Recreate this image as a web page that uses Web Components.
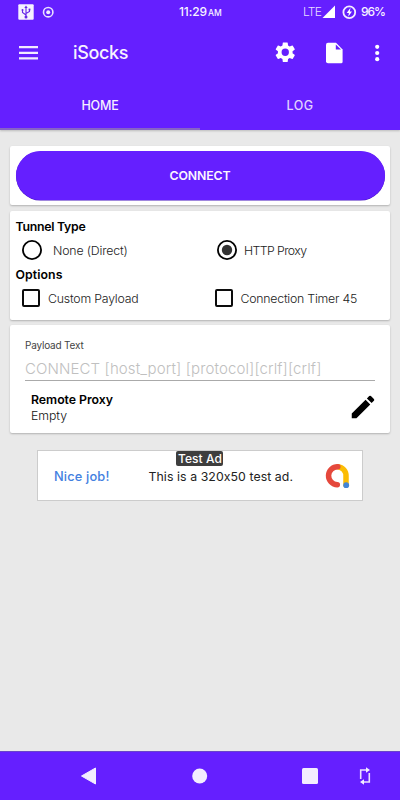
<!DOCTYPE html>
<html lang="en">
<head>
<meta charset="utf-8">
<title>iSocks</title>
<style>
html, body { margin: 0; height: 100%; }
body { font-family: Inter, Roboto, "Liberation Sans", sans-serif; background: #e9e9e9; overflow: hidden; }
</style>
</head>
<body>
<socks-app></socks-app>
<script>
/* Single line of text, tracked so that it spans the width given in "w". */
class FitText extends HTMLElement {
  connectedCallback() {
    const root = this.attachShadow({ mode: 'open' });
    const g = (n, d) => this.getAttribute(n) || d;
    root.innerHTML = `<style>
      :host { display: block; white-space: nowrap; width: ${g('w', 50)}px; font-size: ${g('size', 12)}px;
        font-weight: ${g('weight', 400)}; color: ${g('color', 'inherit')}; line-height: 16px; height: 16px; }
      span { display: inline-block; }
    </style><span></span>`;
    const s = root.querySelector('span');
    s.textContent = g('text', '');
    const n = s.textContent.length;
    const gap = (parseFloat(g('w', 50)) - s.getBoundingClientRect().width) / n;
    s.style.letterSpacing = gap.toFixed(3) + 'px';
  }
}

const define = (name, html) => customElements.define(name, class extends HTMLElement {
  constructor() {
    super();
    this.attachShadow({ mode: 'open' }).innerHTML = html;
  }
});

define('status-bar', `<style>
  :host { display: grid; grid-template-columns: 18px 16px 8px 12px 125px 29px 95px 17px 2px 13px 7px 15px 4px 30px; align-items: center; height: 24px; }
  svg { display: block; }
  .time { display: flex; align-items: baseline; }
</style>
<i></i>
<svg width="16" height="16"><rect x=".3" y=".3" width="15.4" height="15.4" rx="1" fill="#f6f1ff"/><g fill="none" stroke="#6525e8" stroke-width="1.100"><path d="M8 3v10M8 11 4.500 8.500V6M8 9.500l3.500-2V5.500"/></g><g fill="#6525e8"><path d="m8 1.500 1.700 2.600H6.300z"/><circle cx="8" cy="13" r="1.500"/><circle cx="4.500" cy="6" r="1"/><path d="M10.600 4.600h1.800v1.800h-1.800z"/></g></svg>
<i></i>
<svg width="12" height="12"><circle cx="6.200" cy="6.200" r="4.700" fill="none" stroke="#e9dfff" stroke-width="1.600"/><circle cx="6.200" cy="6.200" r="2" fill="#f1eaff"/></svg>
<i></i>
<div class="time"><fit-text text="11:29" size="12" weight="500" w="28"></fit-text></div>
<fit-text text="AM" size="8.500" weight="500" w="13.500" style="margin-top:2px"></fit-text>
<fit-text text="LTE" size="12" weight="300" color="#e8dcff" w="18"></fit-text>
<i></i>
<svg width="13" height="14"><path d="M13 .5V13H.5z" fill="#fff"/></svg>
<i></i>
<svg width="15" height="15" style="margin-top:1px"><circle cx="7.300" cy="7.200" r="5.900" fill="none" stroke="#f4edff" stroke-width="1.800"/><path d="M8.500 2.800 4.700 8h2.200l-.7 3.700L10 6.400H7.800z" fill="#fff"/></svg>
<i></i>
<fit-text text="96%" size="12" weight="500" w="24"></fit-text>`);

define('tool-bar', `<style>
  :host { display: grid; grid-template-columns: 19px 54px 200px 50px 42px 1fr; align-items: center; height: 57px; }
  svg { display: block; }
</style>
<i></i>
<svg width="20" height="14"><path d="M0 1.200h19M0 6.800h19M0 12.400h19" stroke="#f2eaff" stroke-width="2.300"/></svg>
<fit-text text="iSocks" size="18" weight="500" w="55" style="margin-top:1px"></fit-text>
<svg width="24.500" height="24.500" viewBox="0 0 24 24"><path fill="#fff" d="M19.140 12.940c.04-.3.06-.61.06-.94 0-.32-.02-.64-.07-.94l2.030-1.580a.49.49 0 0 0 .12-.61l-1.920-3.320a.488.488 0 0 0-.59-.22l-2.390.96c-.5-.38-1.030-.7-1.620-.94l-.36-2.540a.484.484 0 0 0-.48-.41h-3.840c-.24 0-.43.17-.47.41l-.36 2.540c-.59.24-1.130.57-1.620.94l-2.390-.96c-.22-.08-.47 0-.59.22L2.740 8.870c-.12.21-.08.47.12.61l2.030 1.580c-.05.3-.09.63-.09.94s.02.64.07.94l-2.030 1.580a.49.49 0 0 0-.12.61l1.920 3.320c.12.22.37.29.59.22l2.390-.96c.5.38 1.030.7 1.620.94l.36 2.540c.05.24.24.41.48.41h3.840c.24 0 .44-.17.47-.41l.36-2.540c.59-.24 1.130-.56 1.620-.94l2.390.96c.22.08.47 0 .59-.22l1.920-3.320c.12-.22.07-.47-.12-.61zM12 15.600A3.600 3.600 0 1 1 12 8.400a3.600 3.600 0 0 1 0 7.200z"/></svg>
<svg width="22" height="22" viewBox="0 0 22 22"><path fill="#fff" d="M5 .8h8l6.600 6.600v12.300q0 1.500-1.500 1.500H5q-2 0-2-2V2.800Q3 .8 5 .8z"/><path fill="#651fff" d="M12.800 2.500v5.100H18z"/></svg>
<svg width="24" height="20"><g fill="#fff"><circle cx="12.200" cy="3.800" r="2.100"/><circle cx="12.200" cy="10" r="2.100"/><circle cx="12.200" cy="16.200" r="2.100"/></g></svg>`);

define('tab-strip', `<style>
  :host { display: grid; grid-template-columns: 1fr 1fr; height: 49px; }
  div { display: flex; justify-content: center; align-items: center; border-bottom: 2px solid transparent; padding-top: 3px; box-sizing: border-box; }
  div.on { border-color: #8763c5; }
</style>
<div class="on"><fit-text text="HOME" size="12.500" weight="500" w="37" color="#f6f0ff"></fit-text></div>
<div><fit-text text="LOG" size="12.500" weight="500" w="27" color="#e2d2ff"></fit-text></div>`);

define('app-header', `<style>
  :host { display: block; height: 130px; background: #651fff; color: #f7f2ff; box-shadow: 0 1px 2px #0003; }
</style>
<status-bar></status-bar><tool-bar></tool-bar><tab-strip></tab-strip>`);

define('card-box', `<style>
  :host { display: block; box-sizing: border-box; background: #fff; border-radius: 2px; box-shadow: 0 1px 2px #0000003d; }
</style><slot></slot>`);

define('connect-button', `<style>
  :host { display: flex; align-items: center; justify-content: center; height: 48.500px; box-sizing: border-box; padding-top: 1px; border-radius: 25px; background: #651fff; box-shadow: 0 .5px 0 #4310bd; }
</style><fit-text text="CONNECT" size="12.300" weight="600" w="61" color="#fbf6ff"></fit-text>`);

define('radio-mark', `<style>:host { display: block; width: 20px; height: 20px; }
  circle.dot { display: none; } :host([checked]) circle.dot { display: inline; } svg { display: block; }</style>
<svg width="20" height="20"><circle cx="10" cy="10" r="9.100" fill="none" stroke="#000" stroke-width="1.800"/><circle class="dot" cx="10" cy="10" r="5.200" fill="#333"/></svg>`);

define('check-mark', `<style>:host { display: block; box-sizing: border-box; width: 18px; height: 18px; border: 2px solid #0c0c0c; border-radius: 2px; }</style>`);

define('tunnel-card', `<style>
  :host { display: block; height: 109px; box-sizing: border-box; padding: 8px 0 0 5.500px; color: #000; }
  .row { display: grid; align-items: center; height: 32px; }
  .r { grid-template-columns: 31.500px 164px 27px 1fr; padding-left: 6px; }
  .c { grid-template-columns: 26px 166.500px 26px 1fr; padding-left: 6.500px; }
  radio-mark, check-mark { margin-top: -1px; }
</style>
<fit-text text="Tunnel Type" size="12.300" weight="600" w="70"></fit-text>
<div class="row r"><radio-mark></radio-mark><fit-text text="None (Direct)" weight="300" size="12.300" w="74.500" color="#222"></fit-text><radio-mark checked></radio-mark><fit-text text="HTTP Proxy" weight="300" size="12.300" w="62.500" color="#222"></fit-text></div>
<fit-text text="Options" size="12.300" weight="600" w="47"></fit-text>
<div class="row c"><check-mark></check-mark><fit-text text="Custom Payload" weight="300" size="12.300" w="90.500" color="#222"></fit-text><check-mark></check-mark><fit-text text="Connection Timer 45" weight="300" size="12.300" w="116.500" color="#222"></fit-text></div>`);

define('payload-card', `<style>
  :host { display: block; height: 108px; box-sizing: border-box; padding: 12px 15px 0; color: #000; }
  .field { height: 28px; padding-top: 7.500px; box-sizing: border-box; border-bottom: 1px solid #aaa; }
  .proxy { display: flex; justify-content: space-between; align-items: center; padding: 11px 0 0 6px; height: 32px; }
  svg { display: block; margin: -3px -2.500px 0 0; }
</style>
<fit-text text="Payload Text" size="10" weight="400" w="58.500" color="#444"></fit-text>
<div class="field"><fit-text text="CONNECT [host_port] [protocol][crlf][crlf]" size="15" weight="300" w="296.500" color="#c0c0c0"></fit-text></div>
<div class="proxy"><div><fit-text text="Remote Proxy" size="12.300" weight="600" w="82"></fit-text><fit-text text="Empty" size="12.300" weight="300" w="36" color="#111"></fit-text></div>
<svg width="30" height="30" viewBox="0 0 24 24"><path d="M3 17.250V21h3.750L17.810 9.940l-3.750-3.750zM20.710 7.040a1 1 0 0 0 0-1.410l-2.340-2.340a1 1 0 0 0-1.410 0l-1.830 1.830 3.750 3.750z"/></svg></div>`);

define('ad-banner', `<style>
  :host { display: grid; position: relative; box-sizing: border-box; width: 326px; height: 51px; margin: 17px auto 0; border: 1px solid #ccc; background: #fff; grid-template-columns: 94.500px 174.500px 1fr; align-items: center; padding: 2px 0 0 16px; color: #222; }
  .tag { position: absolute; left: 138px; top: -.500px; width: 47px; height: 15px; background: #3e3e3e; border-radius: 2px; color: #fff; box-sizing: border-box; padding-left: 2px; }
  svg { display: block; }
</style>
<fit-text text="Nice job!" size="12.800" weight="500" w="55.500" color="#4380df"></fit-text>
<fit-text text="This is a 320x50 test ad." size="12.300" weight="400" w="146"></fit-text>
<svg width="28" height="28" style="margin:-1px 0 0 -.500px"><g fill="none" stroke-width="5.500" stroke-linecap="round"><path d="M15 4.700a9 9 0 0 1 8 9.300v9" stroke="#fbbc04"/><path d="M14.300 22.700A9 9 0 1 1 14.800 4.700" stroke="#e5483c"/></g><circle cx="23.200" cy="23.200" r="2.900" fill="#4285d8"/></svg>
<div class="tag"><fit-text text="Test Ad" size="12" weight="500" w="44"></fit-text></div>`);

define('nav-bar', `<style>
  :host { display: grid; grid-template-columns: 80px 112px 110px 57px 1fr; align-items: center; height: 49px; box-sizing: border-box; background: #651fff; border-top: 1px solid #6945c8; }
  svg { display: block; margin-top: -1px; }
</style>
<i></i>
<svg width="18" height="20"><path d="M1.500 10 15.500 2v16z" fill="#f3edff" stroke="#f3edff" stroke-linejoin="round"/></svg>
<svg width="16" height="16"><circle cx="7.700" cy="8" r="7.500" fill="#f3edff"/></svg>
<svg width="16" height="16"><rect width="16" height="16" rx="1.500" fill="#f3edff"/></svg>
<svg width="12" height="18"><g fill="none" stroke="#eadfff" stroke-width="1.600"><path d="M1.700 12V3h6M10.300 6v9h-6"/></g><path d="m7 .2 4 2.800-4 2.800zM5 12.200 1 15l4 2.800z" fill="#f3edff"/></svg>`);

define('socks-app', `<style>
  :host { display: flex; flex-direction: column; width: 400px; height: 800px; background: #e9e9e9; }
  main { flex: 1; padding: 16px 10px 0; }
  card-box + card-box { margin-top: 5.500px; }
  .connect { height: 59px; padding: 5px 5.500px 0; }
</style>
<app-header></app-header>
<main>
<card-box class="connect"><connect-button></connect-button></card-box>
<card-box><tunnel-card></tunnel-card></card-box>
<card-box><payload-card></payload-card></card-box>
<ad-banner></ad-banner>
</main>
<nav-bar></nav-bar>`);

customElements.define('fit-text', FitText);
</script>
</body>
</html>
